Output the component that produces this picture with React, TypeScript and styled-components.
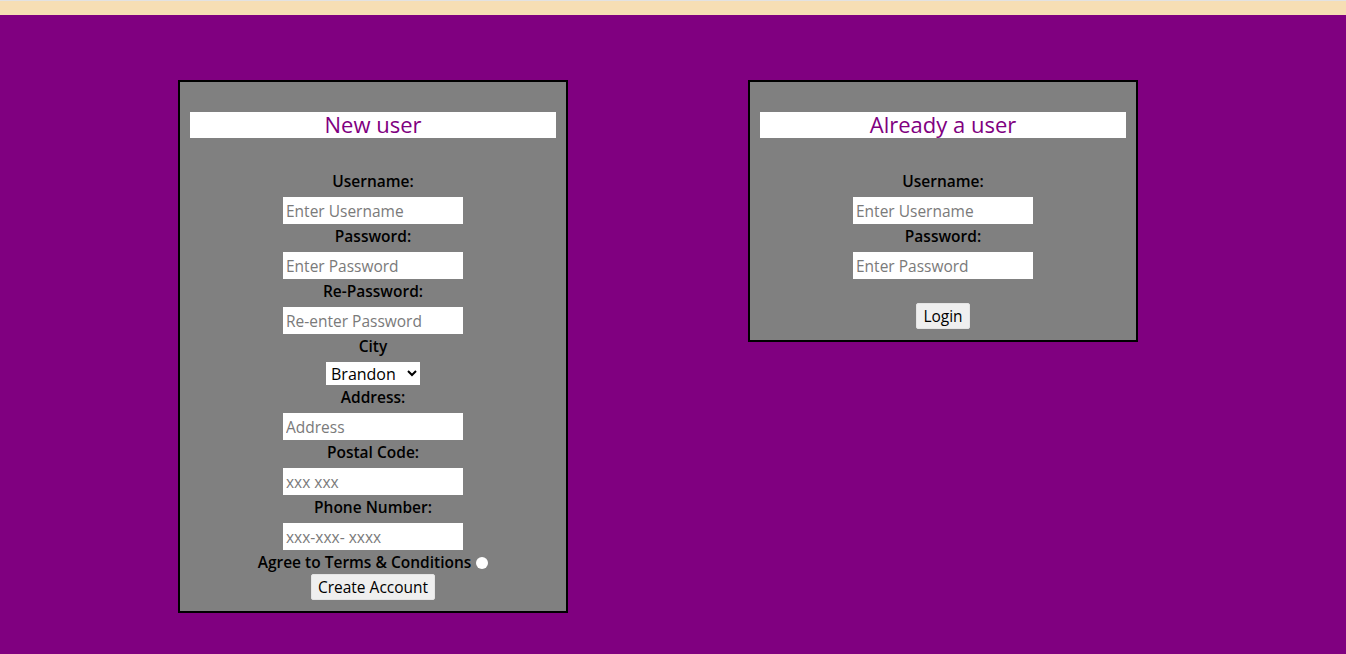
import React from 'react';
import styled, { createGlobalStyle } from 'styled-components';

const GlobalStyle = createGlobalStyle`
  html, body {
    margin: 0;
    padding: 0;
    background-color: #800080;
    font-family: 'Open Sans', 'Noto Sans', sans-serif;
  }
`;

const TopBar = styled.div`
  height: 14px;
  background-color: #f6deb4;
  border-top: 1px solid #e2e2e2;
`;

const Page = styled.div`
  min-height: 639px;
  display: flex;
  flex-direction: row;
  align-items: flex-start;
  padding: 65px 0 0 178px;
  gap: 180px;
  box-sizing: border-box;
`;

const Card = styled.div`
  width: 390px;
  box-sizing: border-box;
  border: 2px solid #000;
  background-color: #808080;
  padding: 30px 10px 11px;
  display: flex;
  flex-direction: column;
  align-items: center;
`;

const Title = styled.h2`
  align-self: stretch;
  margin: 0 0 32px;
  height: 26px;
  line-height: 25px;
  background-color: #fff;
  color: #800080;
  font-size: 22px;
  font-weight: 400;
  text-align: center;
`;

const Label = styled.label`
  display: block;
  font-size: 15.5px;
  font-weight: 600;
  line-height: 22px;
  color: #000;
  margin-bottom: 5px;
`;

const Field = styled.input`
  width: 180px;
  height: 27px;
  box-sizing: border-box;
  border: none;
  background: #fff;
  padding: 0 3px;
  font-family: inherit;
  font-size: 15.5px;
  color: #000;
  margin-bottom: 1px;

  &::placeholder {
    color: #7a7a7a;
  }
`;

const CitySelect = styled.select`
  width: 94px;
  height: 23px;
  box-sizing: border-box;
  border: none;
  background: #fff;
  font-family: inherit;
  font-size: 16px;
  padding: 0 0 0 1px;
  margin-bottom: 1px;
`;

const AgreeRow = styled.div`
  display: flex;
  align-items: center;
  font-size: 15.5px;
  font-weight: 600;
  line-height: 23px;
`;

const Radio = styled.input`
  appearance: none;
  width: 12px;
  height: 12px;
  margin: 0 0 0 5px;
  border-radius: 50%;
  background: #fff;
  border: none;
`;

const Button = styled.button<{ gapTop: number }>`
  margin-top: ${props => props.gapTop}px;
  height: 26px;
  padding: 0 6px;
  border: 1px solid #e4e4e4;
  border-radius: 2px;
  background-color: #efefef;
  font-family: inherit;
  font-size: 15.5px;
  color: #000;
`;

function LabeledField(props: { label: string; placeholder: string; type?: string }) {
  return (
    <>
      <Label>{props.label}</Label>
      <Field type={props.type || 'text'} placeholder={props.placeholder} />
    </>
  );
}

export default function App() {
  return (
    <>
      <GlobalStyle />
      <TopBar />
      <Page>
        <Card>
          <Title>New user</Title>
          <LabeledField label="Username:" placeholder="Enter Username" />
          <LabeledField label="Password:" placeholder="Enter Password" type="password" />
          <LabeledField label="Re-Password:" placeholder="Re-enter Password" type="password" />
          <Label>City</Label>
          <CitySelect defaultValue="Brandon">
            <option>Brandon</option>
            <option>Winnipeg</option>
            <option>Steinbach</option>
          </CitySelect>
          <LabeledField label="Address:" placeholder="Address" />
          <LabeledField label="Postal Code:" placeholder="xxx xxx" />
          <LabeledField label="Phone Number:" placeholder="xxx-xxx- xxxx" />
          <AgreeRow>
            Agree to Terms &amp; Conditions
            <Radio type="radio" name="terms" />
          </AgreeRow>
          <Button gapTop={0}>Create Account</Button>
        </Card>
        <Card>
          <Title>Already a user</Title>
          <LabeledField label="Username:" placeholder="Enter Username" />
          <LabeledField label="Password:" placeholder="Enter Password" type="password" />
          <Button gapTop={23}>Login</Button>
        </Card>
      </Page>
    </>
  );
}
